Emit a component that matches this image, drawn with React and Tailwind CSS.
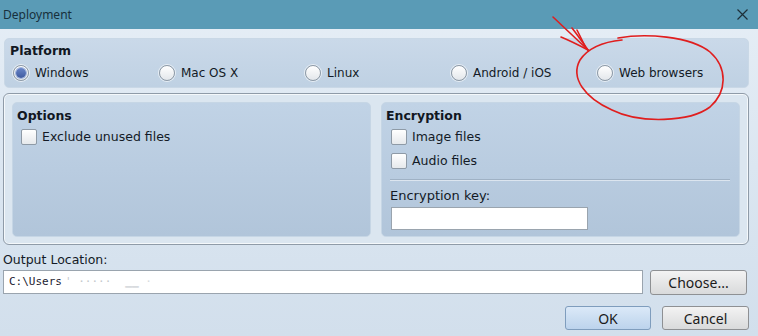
import { useState } from 'react'

const ui = { fontFamily: '"DejaVu Sans", Verdana, sans-serif' }
const sys = { fontFamily: '"Noto Sans", "Open Sans", sans-serif' }

const platforms = ['Windows', 'Mac OS X', 'Linux', 'Android / iOS', 'Web browsers']

function Radio({ checked }) {
  return (
    <span className="relative flex h-[16px] w-[16px] shrink-0 items-center justify-center rounded-full border border-[#8e9aa6] bg-gradient-to-b from-[#ffffff] to-[#e3e7eb] shadow-[0_0_0_1px_rgba(255,255,255,0.6)]">
      {checked && <span className="h-[10px] w-[10px] rounded-full bg-gradient-to-b from-[#6a86c8] to-[#3e5aa0] ring-1 ring-[#9fb4dd]" />}
    </span>
  )
}

function Check() {
  return <span className="h-[16px] w-[16px] shrink-0 rounded-[2px] border border-[#8e9aa6] bg-gradient-to-b from-[#ffffff] to-[#e6e9ec]" />
}

function CheckRow({ label }) {
  return (
    <div className="flex h-[24px] items-center gap-[5px] text-[12.5px] text-[#131a26]">
      <Check />
      <span>{label}</span>
    </div>
  )
}

export default function App() {
  const [platform, setPlatform] = useState('Windows')

  return (
    <div className="relative h-[336px] w-[758px] overflow-hidden bg-gradient-to-b from-[#e6eef6] via-[#dbe6f1] to-[#d2dfec]" style={ui}>
      {/* Title bar */}
      <div className="flex h-[29px] items-center justify-between bg-[#5a9bb6] pl-[3px] pr-[10px]">
        <span className="text-[12px] text-[#17303c]" style={sys}>Deployment</span>
        <svg width="11" height="11" viewBox="0 0 11 11" className="text-[#1d2f38]">
          <path d="M0.5 0.5 L10.5 10.5 M10.5 0.5 L0.5 10.5" stroke="currentColor" strokeWidth="1.2" />
        </svg>
      </div>

      <div className="flex flex-col pl-[3px] pr-[9px] pt-[9px]">
        {/* Platform */}
        <div className="ml-[1px] flex h-[50px] flex-col rounded-[5px] border border-[#c9d8e6] bg-gradient-to-b from-[#cad9e9] to-[#bfd1e3] pt-[4px]">
          <div className="pl-[5px] text-[12.5px] font-bold leading-[16px] text-[#111722]">Platform</div>
          <div className="mt-[5px] flex pl-[8px]">
            {platforms.map(p => (
              <button key={p} onClick={() => setPlatform(p)} className="flex w-[146px] items-center gap-[6px] text-left text-[12px] text-[#131a26]">
                <Radio checked={platform === p} />
                <span>{p}</span>
              </button>
            ))}
          </div>
        </div>

        {/* Options / Encryption frame */}
        <div className="mt-[5px] flex h-[152px] gap-[10px] rounded-[6px] border border-[#8f9ba8] bg-[#dbe6f0] p-[8px] pb-[7px] shadow-[inset_0_0_0_1px_rgba(255,255,255,0.7)]">
          <div className="flex w-[359px] flex-col rounded-[5px] border border-[#c6d6e5] bg-gradient-to-b from-[#c1d3e6] to-[#b1c5da] pl-[4px] pt-[5px]">
            <div className="text-[12.5px] font-bold leading-[16px] text-[#111722]">Options</div>
            <div className="ml-[4px] mt-[1px]">
              <CheckRow label="Exclude unused files" />
            </div>
          </div>

          <div className="flex w-[359px] flex-col rounded-[5px] border border-[#c6d6e5] bg-gradient-to-b from-[#c1d3e6] to-[#b1c5da] pl-[4px] pt-[5px]">
            <div className="text-[12.5px] font-bold leading-[16px] text-[#111722]">Encryption</div>
            <div className="ml-[5px] mt-[1px] flex flex-col">
              <CheckRow label="Image files" />
              <CheckRow label="Audio files" />
            </div>
            <div className="ml-[4px] mr-[9px] mt-[6px] h-px bg-[#9fb1c4] shadow-[0_1px_0_rgba(255,255,255,0.5)]" />
            <div className="ml-[4px] mt-[8px] text-[13px] leading-[16px] text-[#131a26]">Encryption key:</div>
            <div className="ml-[5px] mt-[3px] h-[23px] w-[197px] border border-[#9aa4ae] bg-white" />
          </div>
        </div>

        {/* Output */}
        <div className="mt-[7px] text-[12.5px] leading-[16px] text-[#131a26]">Output Location:</div>
        <div className="mt-[2px] flex gap-[7px]">
          <div className="flex h-[24px] w-[640px] items-center border border-[#9aa4ae] bg-white pl-[5px] text-[11px] text-[#1b2230]" style={{ fontFamily: '"DejaVu Sans Mono", monospace' }}>
            <span>C:\Users</span>
            <span className="ml-[3px] text-[#c4c8cc]">' ·····</span>
            <span className="ml-[14px] text-[#d8dbde]">▁▁ ·</span>
          </div>
          <button className="h-[25px] w-[97px] rounded-[3px] border border-[#8e9093] bg-gradient-to-b from-[#f3f3f3] to-[#d9dadb] text-[14px] text-[#1b1b1b]" style={sys}>Choose...</button>
        </div>

        <div className="mt-[11px] flex justify-end gap-[11px]">
          <button className="h-[24px] w-[86px] rounded-[3px] border border-[#7f9dbd] bg-gradient-to-b from-[#dbe9f8] to-[#bcd3ec] text-[14px] text-[#1b1b1b]" style={sys}>OK</button>
          <button className="h-[24px] w-[87px] rounded-[3px] border border-[#8e9093] bg-gradient-to-b from-[#f3f3f3] to-[#d9dadb] text-[14px] text-[#1b1b1b]" style={sys}>Cancel</button>
        </div>
      </div>

      {/* red hand-drawn annotation */}
      <svg className="pointer-events-none absolute left-0 top-0" width="758" height="336" viewBox="0 0 758 336" fill="none" stroke="#e01e1e" strokeWidth="1.6" strokeLinecap="round">
        <path d="M553 17 L588 50" />
        <path d="M572 28 Q579 37 588 50" />
        <path d="M577 30 Q581 38 585 46" />
        <path d="M561 37 Q573 42 588 50" />
        <path d="M618 38 C645 33, 690 36, 710 52 C728 68, 727 92, 710 107 C690 122, 640 124, 612 110 C585 98, 570 78, 580 60 C588 48, 602 42, 622 40" />
      </svg>
    </div>
  )
}
